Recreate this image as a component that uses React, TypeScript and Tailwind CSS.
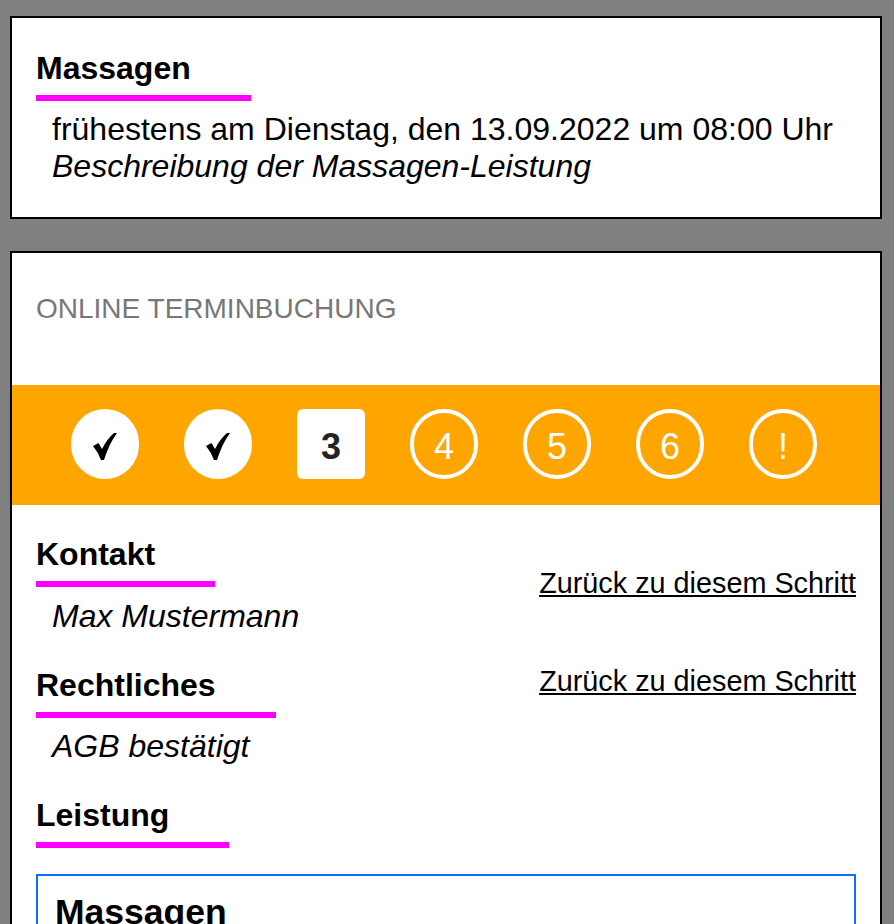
const steps = [
  { label: "✓", kind: "done" },
  { label: "✓", kind: "done" },
  { label: "3", kind: "active" },
  { label: "4", kind: "open" },
  { label: "5", kind: "open" },
  { label: "6", kind: "open" },
  { label: "!", kind: "open" },
];

function Check() {
  return (
    <svg viewBox="0 0 24 28" className="w-6 h-7 mt-[4px]">
      <path d="M0 14 L5.5 11 L9 17 Q14 7 21 1 L24 1 Q16 12 11 28 L8 28 Q5 20 0 14 Z" fill="#000" />
    </svg>
  );
}

function Heading({ children }: { children: string }) {
  return (
    <h2 className="w-fit pr-[60px] pb-[8px] border-b-[6px] border-[#ff00ff] text-[32px] leading-[37px] font-bold text-black">
      {children}
    </h2>
  );
}

function BackLink() {
  return <a className="text-[28.8px] leading-[33px] text-black underline">Zurück zu diesem Schritt</a>;
}

export default function App() {
  return (
    <div className="h-[924px] overflow-hidden bg-[#808080] pt-4 px-[10px] font-['Liberation_Sans',Arial,sans-serif] text-black">
      {/* Leistung summary */}
      <div className="w-[872px] h-[203px] border-2 border-black bg-white pt-[32px] px-[24px]">
        <Heading>Massagen</Heading>
        <div className="pl-4 pt-[10px] text-[32px] leading-[37px]">
          <div>frühestens am Dienstag, den 13.09.2022 um 08:00 Uhr</div>
          <div className="italic">Beschreibung der Massagen-Leistung</div>
        </div>
      </div>

      <div className="mt-8 w-[872px] border-2 border-black bg-white">
        <div className="h-[132px] pt-[40px] pl-[24px] text-[28px] leading-[32px] text-[#777777]">ONLINE TERMINBUCHUNG</div>

        {/* Stepper */}
        <div className="h-[120px] bg-[#ffa500] flex items-center justify-center gap-[45px] pr-[4px] pb-[2px]">
          {steps.map((s, i) =>
            s.kind === "done" ? (
              <div key={i} className="w-[68px] h-[70px] rounded-full bg-white flex items-center justify-center">
                <Check />
              </div>
            ) : s.kind === "active" ? (
              <div key={i} className="w-[68px] h-[70px] pt-[5px] rounded-[6px] bg-white flex items-center justify-center text-[36px] font-bold text-[#212529]">
                {s.label}
              </div>
            ) : (
              <div key={i} className="w-[68px] h-[70px] pt-[5px] rounded-full border-4 border-white flex items-center justify-center text-[36px] text-white">
                {s.label}
              </div>
            ),
          )}
        </div>

        <div className="px-[24px] pt-[31px]">
          <div className="flex justify-between">
            <div>
              <Heading>Kontakt</Heading>
              <div className="pl-4 pt-[11px] text-[32px] leading-[37px] italic">Max Mustermann</div>
            </div>
            <div className="pt-[31px]"><BackLink /></div>
          </div>
          <div className="flex justify-between mt-[32px]">
            <div>
              <Heading>Rechtliches</Heading>
              <div className="pl-4 pt-[10px] text-[32px] leading-[37px] italic">AGB bestätigt</div>
            </div>
            <div className="-mt-[2px]"><BackLink /></div>
          </div>
          <div className="mt-[32px]">
            <Heading>Leistung</Heading>
          </div>
          <div className="mt-[26px] border-2 border-[#0d6efd] pt-[16px] px-[17px] h-[200px]">
            <div className="text-[35.5px] leading-[41px] font-bold">Massagen</div>
          </div>
        </div>
      </div>
    </div>
  );
}
